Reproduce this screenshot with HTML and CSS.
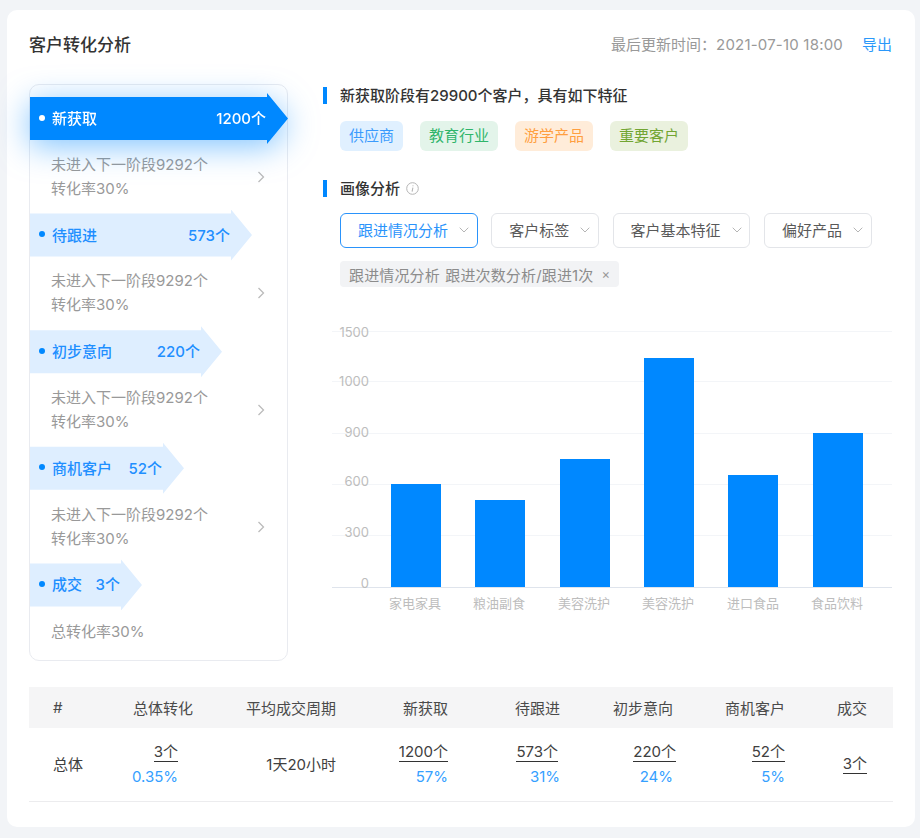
FILE: index.html
```html
<!DOCTYPE html>
<html lang="zh-CN">
<head>
<meta charset="utf-8">
<title>客户转化分析</title>
<link rel="stylesheet" href="styles.css">
</head>
<body>
<div class="card">
  <header class="top">
    <h1 class="title">客户转化分析</h1>
    <div class="meta"><span class="time">最后更新时间：<span class="date">2021-07-10 18:00</span></span><a class="export">导出</a></div>
  </header>
  <div class="main">
    <section class="funnel">
      <div class="glow"><div class="arrow primary w1"><i class="dot"></i><span class="name">新获取</span><span class="val">1200个</span></div></div>
      <div class="detail"><div>未进入下一阶段9292个<br>转化率30%</div><svg class="chev" width="8" height="12" viewBox="0 0 8 12"><path d="M1.5 1 L6.5 6 L1.5 11"/></svg></div>
      <div class="arrow w2"><i class="dot"></i><span class="name">待跟进</span><span class="val">573个</span></div>
      <div class="detail"><div>未进入下一阶段9292个<br>转化率30%</div><svg class="chev" width="8" height="12" viewBox="0 0 8 12"><path d="M1.5 1 L6.5 6 L1.5 11"/></svg></div>
      <div class="arrow w3"><i class="dot"></i><span class="name">初步意向</span><span class="val">220个</span></div>
      <div class="detail"><div>未进入下一阶段9292个<br>转化率30%</div><svg class="chev" width="8" height="12" viewBox="0 0 8 12"><path d="M1.5 1 L6.5 6 L1.5 11"/></svg></div>
      <div class="arrow w4"><i class="dot"></i><span class="name">商机客户</span><span class="val">52个</span></div>
      <div class="detail"><div>未进入下一阶段9292个<br>转化率30%</div><svg class="chev" width="8" height="12" viewBox="0 0 8 12"><path d="M1.5 1 L6.5 6 L1.5 11"/></svg></div>
      <div class="arrow w5"><i class="dot"></i><span class="name">成交</span><span class="val">3个</span></div>
      <div class="detail last"><div>总转化率30%</div></div>
    </section>
    <section class="side">
      <h2 class="heading">新获取阶段有29900个客户，具有如下特征</h2>
      <div class="tags">
        <span class="tag blue">供应商</span>
        <span class="tag green">教育行业</span>
        <span class="tag orange">游学产品</span>
        <span class="tag olive">重要客户</span>
      </div>
      <h2 class="heading second">画像分析<svg class="info" width="13" height="13" viewBox="0 0 13 13"><circle cx="6.5" cy="6.5" r="5.8"/><path d="M6.9 5.6 L6.1 9.6 M7.1 3.4 L7 4.2"/></svg></h2>
      <div class="selects">
        <div class="select active">跟进情况分析<svg class="caret" width="10" height="6" viewBox="0 0 10 6"><path d="M.7 .7 L5 5 L9.3 .7"/></svg></div>
        <div class="select">客户标签<svg class="caret" width="10" height="6" viewBox="0 0 10 6"><path d="M.7 .7 L5 5 L9.3 .7"/></svg></div>
        <div class="select">客户基本特征<svg class="caret" width="10" height="6" viewBox="0 0 10 6"><path d="M.7 .7 L5 5 L9.3 .7"/></svg></div>
        <div class="select">偏好产品<svg class="caret" width="10" height="6" viewBox="0 0 10 6"><path d="M.7 .7 L5 5 L9.3 .7"/></svg></div>
      </div>
      <div class="chip">跟进情况分析 跟进次数分析/跟进1次<span class="close">×</span></div>
      <svg class="chart" width="570" height="295" viewBox="0 0 570 295">
        <g class="grid">
          <line x1="9" x2="569" y1="11.5" y2="11.5"/>
          <line x1="9" x2="569" y1="61.5" y2="61.5"/>
          <line x1="9" x2="569" y1="113.5" y2="113.5"/>
          <line x1="9" x2="569" y1="164.5" y2="164.5"/>
          <line x1="9" x2="569" y1="215.5" y2="215.5"/>
        </g>
        <line class="axis" x1="9" x2="569" y1="267.5" y2="267.5"/>
        <g class="ylab">
          <text x="46" y="17">1500</text>
          <text x="46" y="65.5">1000</text>
          <text x="46" y="116.5">900</text>
          <text x="46" y="166">600</text>
          <text x="46" y="217">300</text>
          <text x="46" y="268">0</text>
        </g>
        <g class="bars">
          <rect x="68" y="164" width="50" height="103"/>
          <rect x="152" y="180" width="50" height="87"/>
          <rect x="237" y="139" width="50" height="128"/>
          <rect x="321" y="38" width="50" height="229"/>
          <rect x="405" y="155" width="50" height="112"/>
          <rect x="490" y="113" width="50" height="154"/>
        </g>
        <g class="xlab">
          <text x="92" y="288">家电家具</text>
          <text x="176" y="288">粮油副食</text>
          <text x="261" y="288">美容洗护</text>
          <text x="345" y="288">美容洗护</text>
          <text x="430" y="288">进口食品</text>
          <text x="514" y="288">食品饮料</text>
        </g>
      </svg>
    </section>
  </div>
  <table class="stats">
    <colgroup>
      <col class="c1"><col class="c2"><col class="c3"><col class="c4"><col class="c5"><col class="c6"><col class="c7"><col class="c8">
    </colgroup>
    <thead>
      <tr><th class="first">#</th><th>总体转化</th><th>平均成交周期</th><th>新获取</th><th>待跟进</th><th>初步意向</th><th>商机客户</th><th class="end">成交</th></tr>
    </thead>
    <tbody>
      <tr>
        <td class="first">总体</td>
        <td class="inset"><u>3个</u><em>0.35%</em></td>
        <td>1天20小时</td>
        <td><u>1200个</u><em>57%</em></td>
        <td><u class="shift2">573个</u><em>31%</em></td>
        <td><u class="over">220个</u><em>24%</em></td>
        <td><u>52个</u><em>5%</em></td>
        <td class="end"><u>3个</u></td>
      </tr>
    </tbody>
  </table>
</div>
</body>
</html>
```

FILE: styles.css
```css
* { box-sizing: border-box; }
html, body { margin: 0; padding: 0; }
body {
  width: 920px;
  height: 838px;
  overflow: hidden;
  background: #f2f4f7;
  padding: 10px 5px 11px 7px;
  font-family: Inter, "Noto Sans CJK SC", sans-serif;
  font-size: 15px;
  color: #333;
}
.card {
  background: #fff;
  border-radius: 10px;
  height: 817px;
  padding: 23px 22px 0;
}
.top { display: flex; justify-content: space-between; align-items: center; height: 24px; }
.title { margin: 0; font-size: 17px; font-weight: 500; color: #333; line-height: 24px; }
.meta { display: flex; gap: 19px; line-height: 24px; padding-right: 1px; }
.time { color: #999; }
.date { letter-spacing: .2px; }
.export { color: #2a98fa; }

.main { display: flex; gap: 35px; margin-top: 27px; }

.funnel {
  width: 259px;
  height: 577px;
  border: 1px solid #e9ebf0;
  border-radius: 10px;
  padding-top: 8px;
  flex: none;
}
.glow { filter: drop-shadow(0 6px 16px rgba(0, 136, 255, .5)); }
.arrow {
  display: flex;
  align-items: center;
  height: 51px;
  padding: 0 22px 2px 9px;
  background: #deeeff;
  color: #1f8fff;
  font-weight: 500;
  clip-path: polygon(0 4px, calc(100% - 21px) 4px, calc(100% - 21px) 0, 100% 50%, calc(100% - 21px) 100%, calc(100% - 21px) calc(100% - 4px), 0 calc(100% - 4px));
}
.arrow.primary { background: #0088ff; color: #fff; }
.w1 { width: 258px; }
.w2 { width: 222px; }
.w3 { width: 192px; }
.w4 { width: 154px; }
.w5 { width: 112px; }
.dot { width: 6px; height: 6px; border-radius: 50%; background: #0088ff; flex: none; margin-right: 7px; }
.primary .dot { background: #fff; }
.name { flex: 1; white-space: nowrap; }
.val { white-space: nowrap; }
.detail {
  display: flex;
  justify-content: space-between;
  align-items: center;
  height: 65.6px;
  padding: 0 22px 0 21px;
  color: #999;
  line-height: 24px;
}
.detail.last { height: auto; padding-top: 9.6px; }
.chev { flex: none; }
.chev path { fill: none; stroke: #bbb; stroke-width: 1.3; }

.side { flex: 1; min-width: 0; }
.heading {
  margin: 3px 0 0;
  height: 17px;
  line-height: 17px;
  border-left: 4px solid #0088ff;
  padding-left: 13px;
  font-size: 15px;
  font-weight: 500;
  color: #333;
  display: flex;
  align-items: center;
}
.heading.second { margin-top: 29px; }
.info { margin-left: 6px; }
.info circle { fill: none; stroke: #b5b5b5; stroke-width: 1; }
.info path { fill: none; stroke: #b5b5b5; stroke-width: 1.1; }

.tags { display: flex; gap: 17px; margin: 17px 0 0 17px; }
.tag { height: 30px; line-height: 30px; padding: 0 9px; border-radius: 6px; }
.blue { background: #e0f0ff; color: #3a9bfd; }
.green { background: #e3f4ea; color: #2fb56a; }
.orange { background: #ffecd9; color: #ff9f3f; }
.olive { background: #eaf1de; color: #72a532; }

.selects { display: flex; gap: 13.7px; margin: 16px 0 0 17px; }
.select {
  display: flex;
  align-items: center;
  gap: 11px;
  height: 35px;
  padding: 0 7.6px 2px 17px;
  border: 1px solid #e3e5e9;
  border-radius: 6px;
  color: #595959;
}
.select.active { border-color: #2a93fb; color: #2a93fb; }
.caret path { fill: none; stroke: #b5b5b5; stroke-width: 1; }

.chip {
  display: inline-flex;
  align-items: center;
  height: 26px;
  margin: 13px 0 0 17px;
  padding: 0 9px;
  background: #f2f3f5;
  border-radius: 4px;
  color: #8c8c8c;
  white-space: nowrap;
  word-spacing: 1px;
  letter-spacing: .15px;
}
.close { margin-left: 8px; font-size: 13px; color: #999; }

.chart { display: block; margin-top: 33px; }
.grid line { stroke: #f3f5f8; stroke-width: 1; }
.axis { stroke: #dfe4ec; stroke-width: 1; }
.bars rect { fill: #0088ff; }
.ylab text { font-size: 13px; fill: #bdbdbd; text-anchor: end; }
.xlab text { font-size: 13px; fill: #bdbdbd; text-anchor: middle; }

.stats {
  table-layout: fixed;
  border-collapse: collapse;
  width: 864px;
  margin-top: 26px;
  color: #404040;
}
.c1 { width: 92px; }
.c2 { width: 73px; }
.c3 { width: 143px; }
.c4 { width: 112px; }
.c5 { width: 112px; }
.c6 { width: 113px; }
.c7 { width: 112px; }
.c8 { width: 107px; }
.stats th {
  height: 41px;
  background: #f5f5f6;
  font-weight: 400;
  text-align: right;
  color: #4a4a4a;
  white-space: nowrap;
}
.stats td {
  height: 73px;
  padding-top: 2px;
  text-align: right;
  line-height: 24px;
  border-bottom: 1px solid #ececee;
  white-space: nowrap;
}
.stats .first { text-align: left; padding-left: 24px; }
.stats .end { padding-right: 26px; }
.stats u {
  display: block;
  width: fit-content;
  margin-left: auto;
  text-decoration: none;
  line-height: 18px;
  margin-top: 2px;
  margin-bottom: 3px;
  border-bottom: 1px solid #333;
}
.stats em { display: block; font-style: normal; color: #35a0ff; }
.stats .inset { padding-right: 16px; }
.stats .shift2 { margin-right: 2px; }
.stats .over { margin-right: -3px; }
```
